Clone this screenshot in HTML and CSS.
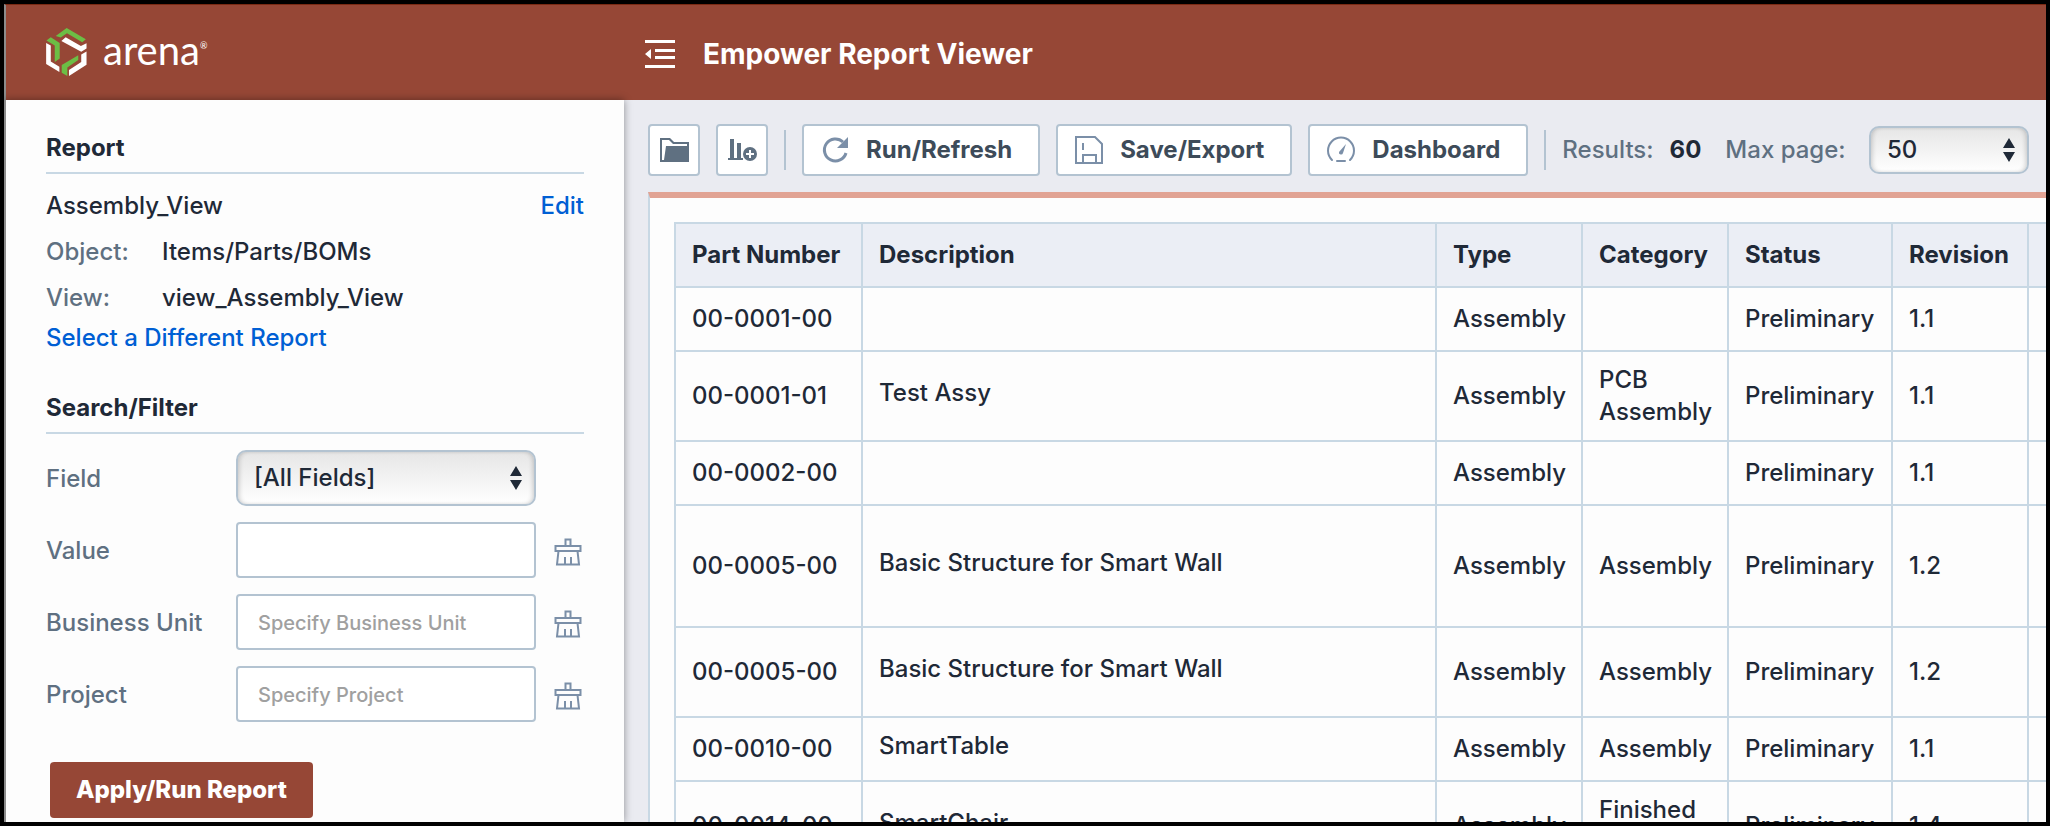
FILE: index.html
```html
<!DOCTYPE html>
<html lang="en">
<head>
    <meta charset="UTF-8">
    <meta name="viewport" content="width=device-width, initial-scale=1.0">
    <title>Empower Report Viewer</title>
    <link rel="stylesheet" href="styles.css">
</head>
<body>

<header class="header">
    <div class="brand">
        <svg class="brand-mark" viewBox="48 39 123 145" aria-hidden="true">
            <path fill="#6cbe45" d="M77 63L110 39L168 73L157 82L111 55L92 68Z"/>
            <path fill="#fff" d="M94 78L107 67L153 93L170 85V101L154 111Z"/>
            <path fill="#6cbe45" d="M49 77L62 67L89 84V131L74 142V92Z"/>
            <path fill="#fff" d="M48 84L62 92V140L88 156V172L48 148Z"/>
            <path fill="#6cbe45" d="M95 151L145 121V136L112 158V184L95 174Z"/>
            <path fill="#fff" d="M170 110V150L117 184V166L154 142V119Z"/>
        </svg>
        <span class="brand-name">arena<sup class="brand-reg">®</sup></span>
    </div>
    <button class="menu-toggle" aria-label="Toggle sidebar">
        <svg width="30" height="28" viewBox="0 0 30 28" fill="#fff">
            <path d="M0 0H30V3H0ZM10 9H30V12H10ZM10 16H30V19H10ZM0 25H30V28H0ZM0 14L6 9V19Z"/>
        </svg>
    </button>
    <h1 class="title">Empower Report Viewer</h1>
</header>

<div class="layout">
    <aside class="sidebar">
        <h2 class="section-title">Report</h2>
        <div class="report-name">
            <span>Assembly_View</span>
            <a href="#">Edit</a>
        </div>
        <dl class="report-info">
            <dt>Object:</dt>
            <dd>Items/Parts/BOMs</dd>
            <dt>View:</dt>
            <dd>view_Assembly_View</dd>
        </dl>
        <a class="change-report" href="#">Select a Different Report</a>

        <h2 class="section-title">Search/Filter</h2>
        <form class="filter">
            <label for="field">Field</label>
            <div class="select">
                <select id="field">
                    <option>[All Fields]</option>
                </select>
                <svg class="select-arrows" viewBox="0 0 12 24"><path d="M6 0L12 10H0ZM6 24L0 14H12Z"/></svg>
            </div>
            <span></span>

            <label for="value">Value</label>
            <input type="text" id="value">
            <button type="button" class="clear" aria-label="Clear value">
                <svg viewBox="0 0 28 28"><path d="M11.500 8V1.500H16.500V8M1.500 8H26.500V13H1.500ZM4.500 13L3 26.500H25L23.500 13M11 26V19M17 26V19"/></svg>
            </button>

            <label for="unit">Business Unit</label>
            <input type="text" id="unit" placeholder="Specify Business Unit">
            <button type="button" class="clear" aria-label="Clear business unit">
                <svg viewBox="0 0 28 28"><path d="M11.500 8V1.500H16.500V8M1.500 8H26.500V13H1.500ZM4.500 13L3 26.500H25L23.500 13M11 26V19M17 26V19"/></svg>
            </button>

            <label for="project">Project</label>
            <input type="text" id="project" placeholder="Specify Project">
            <button type="button" class="clear" aria-label="Clear project">
                <svg viewBox="0 0 28 28"><path d="M11.500 8V1.500H16.500V8M1.500 8H26.500V13H1.500ZM4.500 13L3 26.500H25L23.500 13M11 26V19M17 26V19"/></svg>
            </button>
        </form>
        <button class="apply">Apply/Run Report</button>
    </aside>

    <main class="main">
        <div class="toolbar">
            <button class="button icon-only" aria-label="Open">
                <svg viewBox="0 0 28 28">
                    <path fill="#5f7081" d="M0 2H10L14 6H29V26H0ZM2 4V24H4L6 10H27V8H13L9 4Z" fill-rule="evenodd"/>
                </svg>
            </button>
            <button class="button icon-only" aria-label="Add chart">
                <svg viewBox="0 0 28 28">
                    <path fill="#5f7081" d="M2 3H6V22H9V7H13V22H15V24H0V22H2Z"/>
                    <circle cx="22" cy="18" r="7" fill="#5f7081"/>
                    <path stroke="#fff" stroke-width="2" d="M22 14V22M18 18H26"/>
                </svg>
            </button>
            <span class="divider"></span>
            <button class="button">
                <svg viewBox="0 0 28 28">
                    <path fill="none" stroke="#7b8fa8" stroke-width="3" d="M22 6A11 11 0 1 0 25 17"/>
                    <path fill="#7b8fa8" d="M27 1V12H16Z"/>
                </svg>
                Run/Refresh
            </button>
            <button class="button">
                <svg viewBox="0 0 28 28" fill="none" stroke="#7b8fa8" stroke-width="2">
                    <path d="M1 1H20L27 8V27H1ZM8 27V19H21V27M8 7V14"/>
                </svg>
                Save/Export
            </button>
            <button class="button">
                <svg viewBox="0 0 28 28">
                    <path fill="none" stroke="#7b8fa8" stroke-width="2" stroke-linecap="round" d="M5 24A13 13 0 1 1 23 24M10 25H18"/>
                    <path fill="#7b8fa8" d="M19 8L16 17A2 2 0 0 1 12 16Z"/>
                </svg>
                Dashboard
            </button>
            <span class="divider"></span>
            <div class="paging">
                <span>Results:</span>
                <strong>60</strong>
                <label for="max-page">Max page:</label>
                <div class="select">
                    <select id="max-page">
                        <option>50</option>
                    </select>
                    <svg class="select-arrows" viewBox="0 0 12 24"><path d="M6 0L12 10H0ZM6 24L0 14H12Z"/></svg>
                </div>
            </div>
        </div>

        <div class="panel">
            <table class="results">
                <colgroup>
                    <col class="col-number">
                    <col>
                    <col class="col-type">
                    <col class="col-category">
                    <col class="col-status">
                    <col class="col-revision">
                    <col class="col-more">
                </colgroup>
                <thead>
                    <tr><th>Part Number</th><th>Description</th><th>Type</th><th>Category</th><th>Status</th><th>Revision</th><th></th></tr>
                </thead>
                <tbody>
                    <tr><td>00-0001-00</td><td></td><td>Assembly</td><td></td><td>Preliminary</td><td>1.1</td><td></td></tr>
                    <tr class="medium"><td>00-0001-01</td><td>Test Assy</td><td>Assembly</td><td>PCB Assembly</td><td>Preliminary</td><td>1.1</td><td></td></tr>
                    <tr><td>00-0002-00</td><td></td><td>Assembly</td><td></td><td>Preliminary</td><td>1.1</td><td></td></tr>
                    <tr class="tall"><td>00-0005-00</td><td>Basic Structure for Smart Wall</td><td>Assembly</td><td>Assembly</td><td>Preliminary</td><td>1.2</td><td></td></tr>
                    <tr class="medium"><td>00-0005-00</td><td>Basic Structure for Smart Wall</td><td>Assembly</td><td>Assembly</td><td>Preliminary</td><td>1.2</td><td></td></tr>
                    <tr><td>00-0010-00</td><td>SmartTable</td><td>Assembly</td><td>Assembly</td><td>Preliminary</td><td>1.1</td><td></td></tr>
                    <tr class="medium"><td>00-0014-00</td><td>SmartChair</td><td>Assembly</td><td>Finished Good</td><td>Preliminary</td><td>1.4</td><td></td></tr>
                </tbody>
            </table>
        </div>
    </main>
</div>

</body>
</html>
```

FILE: styles.css
```css
* {
    box-sizing: border-box;
}
body {
    margin: 0;
    height: 100vh;
    display: flex;
    flex-direction: column;
    overflow: hidden;
    border: 4px solid #000;
    font-family: Inter, "Liberation Sans", sans-serif;
    font-size: 24px;
    font-weight: 500;
    line-height: 32px;
    color: #1f2937;
    background-color: #fdfdfd;
}
button, input, select {
    font: inherit;
    color: inherit;
}
button {
    cursor: pointer;
}
a {
    color: #005fd4;
    text-decoration: none;
}

/* header */
.header {
    flex: none;
    height: 96px;
    padding-bottom: 2px;
    display: flex;
    align-items: center;
    color: #fff;
    background-color: #964736;
    border-top: 1px solid #7a2a14;
    border-left: 2px solid #8c8c8c;
}
.brand {
    width: 599px;
    padding-left: 40px;
    display: flex;
    align-items: center;
    gap: 16px;
}
.brand-mark {
    width: 41px;
    height: 48px;
}
.brand-name {
    padding-bottom: 4px;
    font-family: Lato, sans-serif;
    font-size: 40px;
    font-weight: 400;
    line-height: 44px;
}
.brand-reg {
    font-size: 9px;
    vertical-align: 16px;
    line-height: 0;
}
.menu-toggle {
    margin: 4px 28px 0 40px;
    padding: 0;
    display: flex;
    border: none;
    background: none;
}
.title {
    margin: 4px 0 0;
    font-size: 28px;
    font-weight: 700;
}

/* sidebar */
.layout {
    flex: 1;
    min-height: 0;
    display: flex;
}
.sidebar {
    flex: none;
    width: 620px;
    padding: 32px 40px 0;
    border-left: 2px solid #8c8c8c;
    background-color: #fdfdfd;
    box-shadow: 0 0 8px rgba(0, 0, 0, 0.4);
    z-index: 1;
}
.section-title {
    margin: 0;
    padding-bottom: 8px;
    border-bottom: 2px solid #c8d8e4;
    font-size: 24px;
    font-weight: 700;
}
.report-name {
    margin-top: 16px;
    display: flex;
    justify-content: space-between;
}
.report-info {
    margin: 14px 0 8px;
    display: grid;
    grid-template-columns: 116px 1fr;
    row-gap: 14px;
}
.report-info dt {
    color: #5f7081;
}
.report-info dd {
    margin: 0;
}
.change-report {
    display: block;
    margin-bottom: 38px;
}
.filter {
    margin: 16px 0 40px;
    display: grid;
    grid-template-columns: 190px 300px 28px;
    align-items: center;
    row-gap: 16px;
}
.filter label {
    padding-top: 2px;
    color: #5f7081;
}
.filter input {
    width: 100%;
    height: 56px;
    padding: 2px 20px 0;
    border: 2px solid #b3c3d1;
    border-radius: 4px;
    background-color: #fff;
    font-size: 20px;
}
.filter input::placeholder {
    color: #a0a0a0;
}
.clear {
    margin-left: 18px;
    padding: 4px 0 0;
    display: flex;
    border: none;
    background: none;
}
.clear svg {
    flex: none;
    width: 28px;
    height: 28px;
    fill: none;
    stroke: #7b8fa8;
    stroke-width: 2;
}
.apply {
    height: 56px;
    margin-left: 4px;
    padding: 0 26px;
    border: none;
    border-radius: 4px;
    color: #fff;
    background-color: #964736;
    font-weight: 800;
}

/* drop-downs */
.select {
    position: relative;
}
.select select {
    width: 100%;
    height: 56px;
    padding: 0 40px 0 16px;
    appearance: none;
    border: 2px solid #b3c3d1;
    border-radius: 10px;
    background: linear-gradient(#e6e6e6, #fff);
    box-shadow: inset 3px 0 5px -2px rgba(0, 0, 0, 0.2), inset -3px 0 5px -2px rgba(0, 0, 0, 0.2);
}
.select-arrows {
    position: absolute;
    top: calc(50% - 12px);
    right: 14px;
    width: 12px;
    height: 24px;
    fill: #1f2937;
    pointer-events: none;
}

/* toolbar */
.main {
    flex: 1;
    min-width: 0;
    display: flex;
    flex-direction: column;
    padding: 24px 0 0 24px;
    background-color: #eaebf1;
}
.toolbar {
    display: flex;
    align-items: center;
    gap: 16px;
    margin: 0 17px 16px 0;
}
.button {
    flex: none;
    height: 52px;
    padding: 0 26px 0 17px;
    display: flex;
    align-items: center;
    gap: 17px;
    border: 2px solid #b3c3d1;
    border-radius: 4px;
    color: #3d4b59;
    background-color: #fff;
    font-weight: 700;
}
.button svg {
    width: 28px;
    height: 28px;
    overflow: visible;
}
.icon-only {
    width: 52px;
    padding: 0;
    justify-content: center;
}
.divider {
    width: 2px;
    height: 40px;
    background-color: #b3c3d1;
}
.paging {
    flex: 1;
    display: flex;
    align-items: center;
    gap: 16px;
    color: #5f7081;
    white-space: nowrap;
}
.paging strong {
    margin-right: 8px;
    color: #1f2937;
    font-weight: 700;
}
.paging .select {
    width: 160px;
    margin-left: auto;
}
.paging select {
    height: 48px;
    color: #1f2937;
}

/* results */
.panel {
    flex: 1;
    min-height: 0;
    overflow: hidden;
    padding: 24px 0 0 24px;
    border-top: 6px solid #e1a394;
    border-left: 2px solid #c8d8e4;
    background-color: #fdfdfd;
}
.results {
    width: 100%;
    table-layout: fixed;
    border-collapse: collapse;
}
.results th,
.results td {
    height: 64px;
    padding: 12px 16px;
    border: 2px solid #c8d8e4;
    text-align: left;
    vertical-align: middle;
}
.results th {
    padding-right: 8px;
    background-color: #ebeef5;
    font-weight: 700;
}
.results td {
    padding-right: 8px;
}
.results td:nth-child(2) {
    padding-bottom: 18px;
}
.results th:last-child,
.results td:last-child {
    padding: 0;
    border-right: none;
}
.results .medium td {
    height: 90px;
}
.results .tall td {
    height: 122px;
}
.col-number {
    width: 187px;
}
.col-type,
.col-category {
    width: 146px;
}
.col-status {
    width: 164px;
}
.col-revision {
    width: 136px;
}
.col-more {
    width: 18px;
}
```
